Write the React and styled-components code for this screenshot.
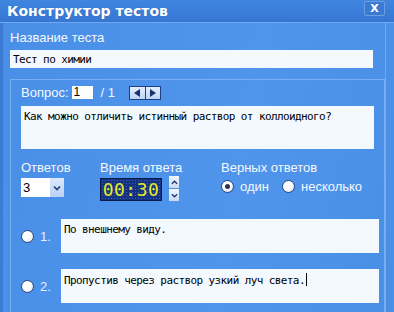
import React from "react";
import styled, { createGlobalStyle } from "styled-components";

const GlobalStyle = createGlobalStyle`
    html, body {
        margin: 0;
        padding: 0;
        background: #4b90e8;
        overflow: hidden;
    }
    * {
        box-sizing: border-box;
    }
`;

const Window = styled.div`
    width: 394px;
    height: 312px;
    display: flex;
    flex-direction: column;
    font-family: "Liberation Sans", Arial, sans-serif;
    color: #ffffff;
`;

const TitleBar = styled.div`
    height: 23px;
    flex: none;
    display: flex;
    align-items: flex-start;
    justify-content: space-between;
    padding: 2px 9px 0 7px;
    background: linear-gradient(#3f86df, #3a7dd8 60%, #3676d1);
    border-bottom: 1px solid #6ea8f0;
`;

const Title = styled.h1`
    margin: 0;
    font-family: "DejaVu Sans", Verdana, sans-serif;
    font-size: 14px;
    font-weight: bold;
    letter-spacing: 0;
    line-height: 18px;
    color: #ffffff;
    text-shadow: 0 0 1px rgba(20, 50, 120, 0.4);
`;

const CloseButton = styled.button`
    width: 21px;
    height: 15px;
    margin-top: -1px;
    padding: 0;
    border: 1px solid #6c9fe0;
    border-radius: 2px;
    background: #3b7ad3;
    color: #ffffff;
    font-family: "DejaVu Sans", sans-serif;
    font-size: 11px;
    font-weight: bold;
    line-height: 12px;
`;

const Body = styled.div`
    flex: 1;
    display: flex;
    background: linear-gradient(100deg, #4a8fe7, #4f95ec 60%, #4a8fe7);
`;

const Main = styled.div`
    width: 386px;
    border-left: 3px solid #3c7bd4;
    border-right: 1px solid #74acf2;
    padding: 7px 0 0 7px;
    display: flex;
    flex-direction: column;
`;

const Label = styled.div`
    font-size: 13px;
    line-height: 15px;
    color: #f4f8ff;
    white-space: nowrap;
`;

const Field = styled.div`
    background: #f3f9ff;
    color: #000000;
    font-family: "DejaVu Sans Mono", "Liberation Mono", monospace;
    font-size: 11px;
    letter-spacing: -0.6px;
    line-height: 13px;
    padding: ${(p) => p.$pad || "3px 3px"};
    width: ${(p) => p.$w}px;
    height: ${(p) => p.$h}px;
    flex: none;
    white-space: nowrap;
`;

const Caret = styled.span`
    display: inline-block;
    width: 1px;
    height: 13px;
    background: #000;
    vertical-align: -2px;
    margin-left: 1px;
`;

const GroupBox = styled.div`
    margin-top: 11px;
    flex: 1;
    border: 1px solid #7ab0f2;
    border-bottom: none;
    padding: 4px 0 0 10px;
    display: flex;
    flex-direction: column;
`;

const QuestionRow = styled.div`
    display: flex;
    align-items: center;
    height: 17px;
`;

const NumberInput = styled.div`
    width: 21px;
    height: 13px;
    margin-left: 3px;
    background: #ffffff;
    color: #000;
    font-size: 12px;
    line-height: 13px;
    padding-left: 2px;
`;

const Slash = styled.span`
    margin-left: 8px;
    font-size: 13px;
    color: #f0f6ff;
`;

const NavGroup = styled.div`
    display: flex;
    margin-left: 14px;
    border: 1px solid #1c3f86;
`;

const NavButton = styled.div`
    width: 15px;
    height: 12px;
    background: linear-gradient(#e4efff, #bcd4f4);
    display: flex;
    align-items: center;
    justify-content: center;
    & + & {
        border-left: 1px solid #1c3f86;
    }
`;

const SettingsRow = styled.div`
    display: flex;
    margin-top: 11px;
`;

const Column = styled.div`
    display: flex;
    flex-direction: column;
    width: ${(p) => p.$w}px;
`;

const Select = styled.div`
    display: flex;
    margin-top: 3px;
    height: 19px;
    width: 43px;
`;

const SelectValue = styled.div`
    flex: 1;
    background: #ffffff;
    color: #000;
    font-size: 13px;
    line-height: 19px;
    padding-left: 2px;
`;

const SelectArrow = styled.div`
    width: 14px;
    background: linear-gradient(#dce9fb, #b9d1f3);
    display: flex;
    align-items: center;
    justify-content: center;
`;

const TimerRow = styled.div`
    display: flex;
    align-items: flex-start;
    margin-top: 1px;
`;

const Timer = styled.div`
    margin-top: 2px;
    width: 62px;
    height: 23px;
    border: 1px solid #0a1a4a;
    background-color: #14327e;
    background-image: radial-gradient(#3d5fb4 0.8px, transparent 1px);
    background-size: 3px 3px;
    color: #e6ea2a;
    font-family: "DejaVu Sans Mono", monospace;
    font-size: 18px;
    line-height: 21px;
    text-align: center;
    letter-spacing: 0.5px;
`;

const Spinner = styled.div`
    margin-left: 7px;
    display: flex;
    flex-direction: column;
    gap: 1px;
`;

const SpinButton = styled.div`
    width: 10px;
    height: 12px;
    background: linear-gradient(#f2f7ff, #c8dbf5);
    display: flex;
    align-items: center;
    justify-content: center;
`;

const RadioRow = styled.div`
    display: flex;
    align-items: center;
    margin-top: 4px;
`;

const Radio = styled.span`
    width: 13px;
    height: 13px;
    flex: none;
    border-radius: 50%;
    border: 1px solid #2b4680;
    background: radial-gradient(circle at 40% 35%, #ffffff 40%, #cfd5e3 100%);
    display: flex;
    align-items: center;
    justify-content: center;
    &::after {
        content: "";
        width: 5px;
        height: 5px;
        border-radius: 50%;
        background: #2a3550;
        display: ${(p) => (p.$checked ? "block" : "none")};
    }
`;

const RadioText = styled.span`
    font-size: 13px;
    margin: 0 13px 0 6px;
    color: #f4f8ff;
`;

const AnswerRow = styled.div`
    display: flex;
    align-items: center;
    margin-top: ${(p) => p.$mt}px;
`;

const AnswerNumber = styled.span`
    width: 27px;
    font-size: 13px;
    padding-left: 6px;
    color: #e6f0ff;
`;

const Chevron = ({ dir = "down", size = 8 }) => (
    <svg width={size} height={size} viewBox="0 0 8 8">
        <path
            d={dir === "down" ? "M1 2.5 L4 5.5 L7 2.5" : "M1 5.5 L4 2.5 L7 5.5"}
            fill="none"
            stroke="#1f3c7c"
            strokeWidth="1.6"
        />
    </svg>
);

const Triangle = ({ dir }) => (
    <svg width="8" height="8" viewBox="0 0 8 8">
        <path
            d={dir === "left" ? "M7 0 L1 4 L7 8 Z" : "M1 0 L7 4 L1 8 Z"}
            fill="#1a3070"
        />
    </svg>
);

export default function App() {
    return (
        <>
            <GlobalStyle />
            <Window>
                <TitleBar>
                    <Title>Конструктор тестов</Title>
                    <CloseButton>X</CloseButton>
                </TitleBar>
                <Body>
                    <Main>
                        <Label>Название теста</Label>
                        <Field $w={363} $h={18} style={{ marginTop: 5 }}>
                            Тест по химии
                        </Field>

                        <GroupBox>
                            <QuestionRow>
                                <Label>Вопрос:</Label>
                                <NumberInput>1</NumberInput>
                                <Slash>/ 1</Slash>
                                <NavGroup>
                                    <NavButton>
                                        <Triangle dir="left" />
                                    </NavButton>
                                    <NavButton>
                                        <Triangle dir="right" />
                                    </NavButton>
                                </NavGroup>
                            </QuestionRow>
                            <Field $w={353} $h={43} style={{ marginTop: 5 }} $pad="4px 3px">
                                Как можно отличить истинный раствор от коллоидного?
                            </Field>

                            <SettingsRow>
                                <Column $w={79}>
                                    <Label>Ответов</Label>
                                    <Select>
                                        <SelectValue>3</SelectValue>
                                        <SelectArrow>
                                            <Chevron />
                                        </SelectArrow>
                                    </Select>
                                </Column>
                                <Column $w={121}>
                                    <Label>Время ответа</Label>
                                    <TimerRow>
                                        <Timer>00:30</Timer>
                                        <Spinner>
                                            <SpinButton>
                                                <Chevron dir="up" size={7} />
                                            </SpinButton>
                                            <SpinButton>
                                                <Chevron size={7} />
                                            </SpinButton>
                                        </Spinner>
                                    </TimerRow>
                                </Column>
                                <Column>
                                    <Label>Верных ответов</Label>
                                    <RadioRow>
                                        <Radio $checked />
                                        <RadioText>один</RadioText>
                                        <Radio />
                                        <RadioText>несколько</RadioText>
                                    </RadioRow>
                                </Column>
                            </SettingsRow>

                            <AnswerRow $mt={18}>
                                <Radio />
                                <AnswerNumber>1.</AnswerNumber>
                                <Field $w={318} $h={34} $pad="4px 3px">
                                    По внешнему виду.
                                </Field>
                            </AnswerRow>
                            <AnswerRow $mt={16}>
                                <Radio />
                                <AnswerNumber>2.</AnswerNumber>
                                <Field $w={318} $h={34} $pad="4px 3px">
                                    Пропустив через раствор узкий луч света.
                                    <Caret />
                                </Field>
                            </AnswerRow>
                        </GroupBox>
                    </Main>
                </Body>
            </Window>
        </>
    );
}
